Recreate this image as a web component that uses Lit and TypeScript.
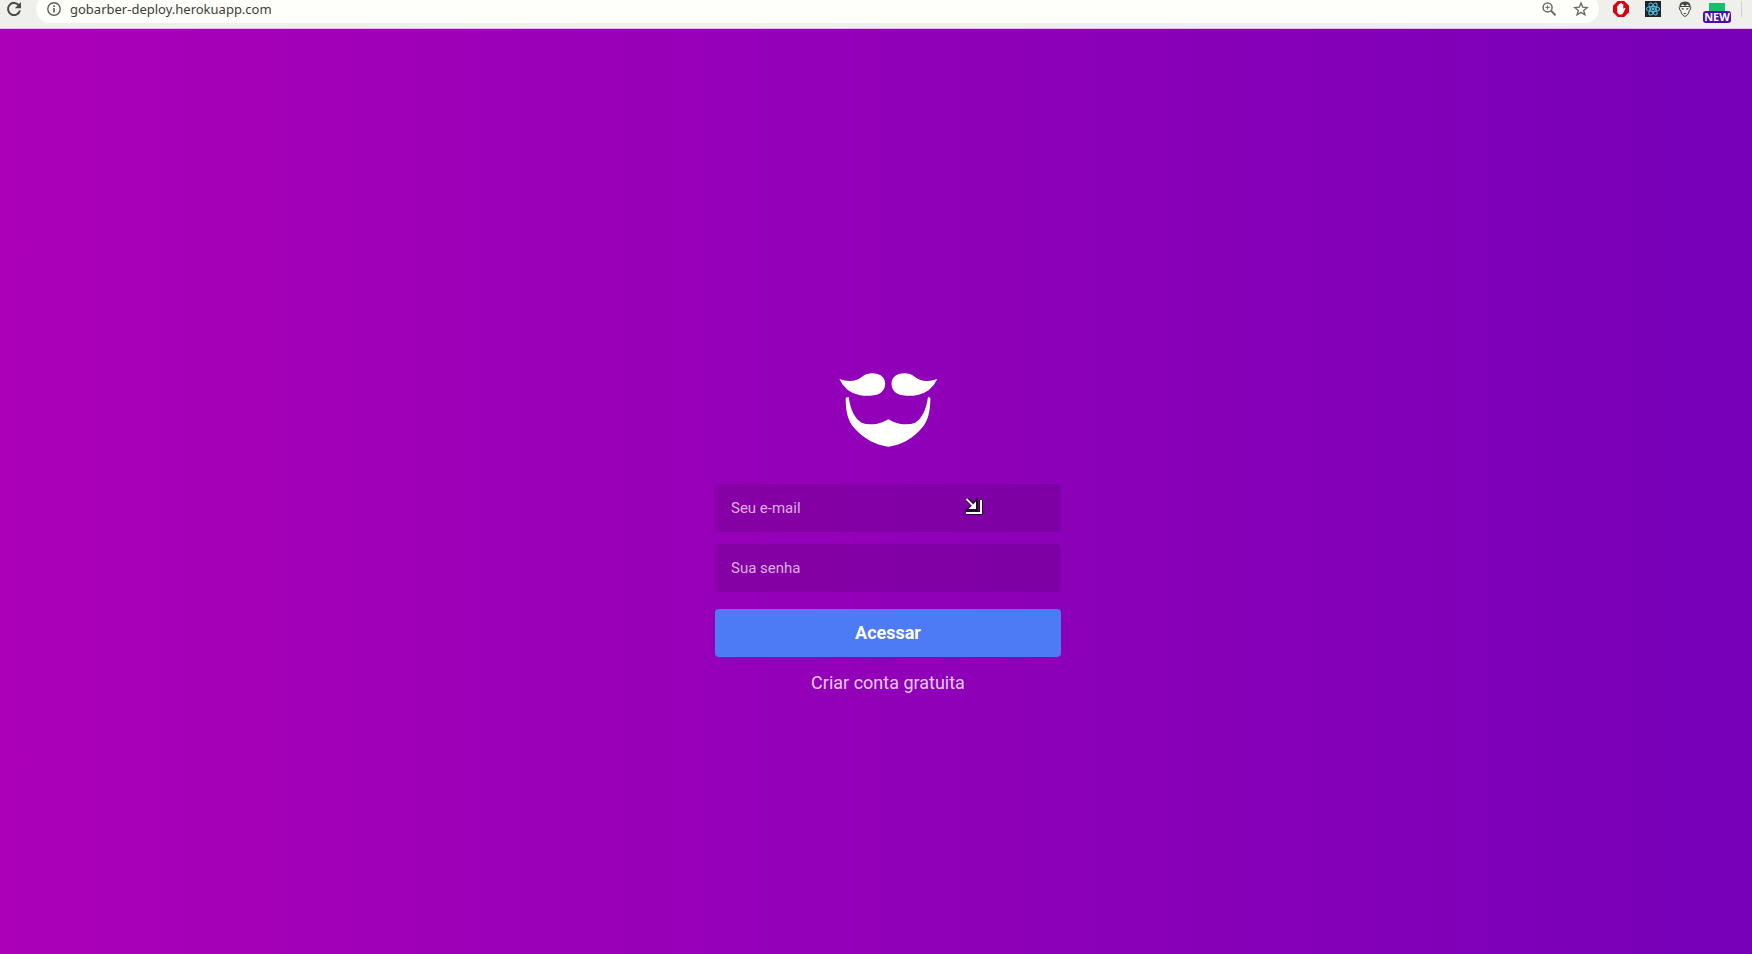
import { LitElement, html, css } from "lit";
import { customElement } from "lit/decorators.js";

@customElement("browser-bar")
class BrowserBar extends LitElement {
  static styles = css`
    :host {
      display: block;
      flex: none;
      height: 28px;
      overflow: hidden;
      background: #efefeb;
      border-bottom: 1px solid #f0b4f4;
    }
    .row {
      display: flex;
      align-items: center;
      height: 40px;
      margin-top: -11px;
      padding: 0 10px 0 6px;
    }
    button {
      display: flex;
      padding: 0;
      border: 0;
      background: none;
    }
    svg {
      display: block;
      flex: none;
    }
    .pill {
      display: flex;
      flex: 1;
      align-items: center;
      height: 28px;
      margin-left: 14px;
      padding: 0 10px;
      border-radius: 14px;
      background: #fefefa;
    }
    .address {
      flex: 1;
      min-width: 0;
      margin-left: 8px;
      padding: 0;
      border: 0;
      outline: 0;
      background: none;
      color: #3c3d3a;
      font: 13px/20px "Noto Sans", sans-serif;
    }
    .tools {
      display: flex;
      gap: 16px;
    }
    .extensions {
      display: flex;
      align-items: center;
      gap: 16px;
      margin-left: 14px;
    }
    .tag {
      position: relative;
    }
    .badge {
      position: absolute;
      left: -6px;
      top: 10px;
      width: 28px;
      border-radius: 3px;
      background: #4c0aa8;
      color: #fff;
      font: 700 11px/12px "Noto Sans", sans-serif;
      text-align: center;
    }
    .divider {
      width: 1px;
      height: 16px;
      background: #cfcfcb;
    }
  `;

  render() {
    return html`
      <div class="row">
        <button aria-label="Recarregar">
          <svg width="16" height="16" viewBox="0 0 16 16">
            <path d="M13.2 4.6A6.1 6.1 0 1 0 14 9.6" fill="none" stroke="#4a4b48" stroke-width="2" />
            <path d="M15 1v6.2H8.8z" fill="#4a4b48" />
          </svg>
        </button>
        <div class="pill">
          <svg width="16" height="16" viewBox="0 0 16 16">
            <circle cx="8" cy="8" r="6.2" fill="none" stroke="#5c5d5a" stroke-width="1.4" />
            <path d="M7.2 7h1.6v4.5H7.2zM7.2 4.3h1.6v1.6H7.2z" fill="#5c5d5a" />
          </svg>
          <input class="address" aria-label="Endereço" value="gobarber-deploy.herokuapp.com" />
          <div class="tools">
            <button aria-label="Zoom">
              <svg width="16" height="16" viewBox="0 0 16 16" fill="none" stroke="#6a6b68">
                <circle cx="6.6" cy="6.4" r="4.5" stroke-width="1.5" />
                <path d="M10 9.8l4.5 4.5" stroke-width="2" />
                <path d="M4.4 6.4h4.4M6.6 4.2v4.4" stroke-width="1" />
              </svg>
            </button>
            <button aria-label="Favoritos">
              <svg width="16" height="16" viewBox="0 0 16 16">
                <path d="M8 2l1.7 4.2 4.5.3-3.5 2.9 1.2 4.4L8 11.4l-3.9 2.4 1.2-4.4L1.8 6.5l4.5-.3z" fill="none" stroke="#6a6b68" stroke-width="1.4" />
              </svg>
            </button>
          </div>
        </div>
        <div class="extensions">
          <svg width="16" height="16" viewBox="0 0 16 16">
            <path d="M4.8 0h6.4L16 4.8v6.4L11.2 16H4.8L0 11.2V4.8z" fill="#d9000f" />
            <path d="M4.2 9V5q.8-1 1.5 0V3.2q.8-.9 1.5 0v-.9q.9-.9 1.700 0v1q.8-.8 1.400 0v4.800l.9-1.200q1.200-.4 1.200.6l-2.200 4.600q-.8 1.500-2.500 1.500-3.500 0-3.500-3.400z" fill="#fff" />
          </svg>
          <svg width="16" height="16" viewBox="0 0 16 16">
            <path d="M0 0h16v16H0z" fill="#20232a" />
            <g fill="none" stroke="#55bfe0" stroke-width="1.1">
              <ellipse cx="8" cy="8" rx="6.6" ry="2.5" />
              <ellipse cx="8" cy="8" rx="6.6" ry="2.5" transform="rotate(60 8 8)" />
              <ellipse cx="8" cy="8" rx="6.6" ry="2.5" transform="rotate(120 8 8)" />
            </g>
            <circle cx="8" cy="8" r="1.4" fill="#55bfe0" />
          </svg>
          <svg width="16" height="16" viewBox="0 0 16 16">
            <path d="M3 5.500L2.200 6.500 2.800 9l1 .6.6 2.600Q6 15.200 8 15.400q2-.2 3.600-3.200l.6-2.600 1-.6.6-2.500-.8-1z" fill="#f5f5f1" stroke="#454643" stroke-width="1" />
            <path d="M2.500 6.600Q1.600.5 8 .5t5.500 6.100l-1.300-.4-.5-2.200-1.700-.7L8 5.200 6 3.300l-1.700.7-.5 2.200z" fill="#454643" />
            <path d="M4.400 6.800l2.700.9-.3.900H5zM11.600 6.800l-2.700.9.3.900H11zM6 12h4l-1.400 1H7.400z" fill="#454643" />
          </svg>
          <div class="tag">
            <svg width="16" height="16" viewBox="0 0 16 16">
              <path d="M0 2h16v8H0z" fill="#14bf6e" />
            </svg>
            <span class="badge">NEW</span>
          </div>
          <span class="divider"></span>
        </div>
      </div>
    `;
  }
}

@customElement("sign-in")
class SignIn extends LitElement {
  static styles = css`
    :host {
      display: flex;
      flex: 1;
      align-items: center;
      justify-content: center;
      padding: 82px 0 0 24px;
      background: linear-gradient(90deg, #ab00b8, #7700b8);
      font-family: Roboto, sans-serif;
    }
    .content {
      display: flex;
      flex-direction: column;
      align-items: center;
      width: 346px;
    }
    .logo {
      display: block;
    }
    form {
      display: flex;
      flex-direction: column;
      align-self: stretch;
      gap: 12px;
      margin-top: 37px;
    }
    input {
      box-sizing: border-box;
      height: 48px;
      padding: 0 16px;
      border: 0;
      border-radius: 4px;
      outline: 0;
      background: rgba(0, 0, 0, 0.1);
      color: #fff;
      font: 15px Roboto, sans-serif;
    }
    input::placeholder {
      color: rgba(255, 255, 255, 0.7);
      opacity: 1;
    }
    button {
      height: 48px;
      margin-top: 5px;
      padding: 0;
      border: 0;
      border-radius: 4px;
      background: #4d7af5;
      color: #fff;
      font: 700 18px Roboto, sans-serif;
    }
    a {
      margin-top: 15px;
      color: rgba(255, 255, 255, 0.8);
      font-size: 18px;
      line-height: 21px;
      text-decoration: none;
    }
    .cursor {
      position: absolute;
      right: 78px;
      top: 14px;
    }
    .field {
      position: relative;
      display: grid;
    }
  `;

  render() {
    return html`
      <div class="content">
        <svg class="logo" width="99" height="74" viewBox="56 38 297 222" fill="#fffffb" role="img" aria-label="GoBarber">
          <path d="M57 56Q98 70 124 50C142 35 166 37 181 45C199 56 198 83 184 95C171 107 142 109 116 104Q76 96 57 56z" />
          <path d="M351 56Q310 70 284 50C266 35 242 37 227 45C209 56 210 83 224 95C237 107 266 109 292 104Q332 96 351 56z" />
          <path d="M76 112L85 110C90 148 104 176 124 187Q142 195 171 190Q190 186 204 177Q218 186 237 190Q266 195 284 187C304 176 318 148 323 110L330 112C330 158 322 182 305 202Q265 250 204 259Q143 250 101 202C84 182 76 158 76 112z" />
        </svg>
        <form @submit=${(e: Event) => e.preventDefault()}>
          <div class="field">
            <input type="email" placeholder="Seu e-mail" aria-label="Seu e-mail" />
            <svg class="cursor" width="18" height="18" viewBox="-1 0 18 18">
              <path d="M1 1l6 6M10 4v7H3zM15 2v13H0" fill="none" stroke="#24072f" stroke-width="4" />
              <path d="M10 3.500V11H2.500z" fill="#fff" />
              <path d="M0.500 1l6 6" stroke="#fff" stroke-width="2" />
              <path d="M15 2v13H0" fill="none" stroke="#fff" stroke-width="2" />
            </svg>
          </div>
          <input type="password" placeholder="Sua senha" aria-label="Sua senha" />
          <button type="submit">Acessar</button>
        </form>
        <a href="#">Criar conta gratuita</a>
      </div>
    `;
  }
}

@customElement("app-root")
class AppRoot extends LitElement {
  static styles = css`
    :host {
      display: flex;
      flex-direction: column;
      min-height: 100vh;
    }
  `;

  render() {
    return html`<browser-bar></browser-bar><sign-in></sign-in>`;
  }
}
